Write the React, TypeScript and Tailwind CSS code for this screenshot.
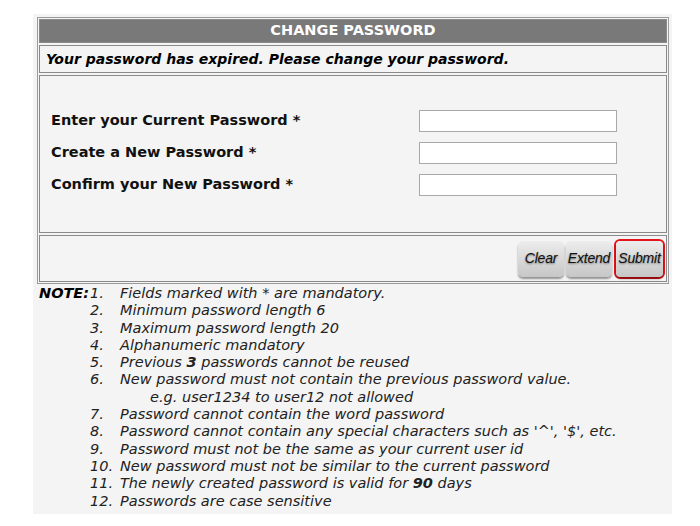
import React from 'react';

const verdana = { fontFamily: '"DejaVu Sans", Verdana, sans-serif' };

const FIELDS = ['Enter your Current Password *', 'Create a New Password *', 'Confirm your New Password *'];

const NOTES: { n: string; text: React.ReactNode; sub?: string }[] = [
  { n: '1.', text: 'Fields marked with * are mandatory.' },
  { n: '2.', text: 'Minimum password length 6' },
  { n: '3.', text: 'Maximum password length 20' },
  { n: '4.', text: 'Alphanumeric mandatory' },
  { n: '5.', text: <>Previous <b>3</b> passwords cannot be reused</> },
  { n: '6.', text: 'New password must not contain the previous password value.', sub: 'e.g. user1234 to user12 not allowed' },
  { n: '7.', text: 'Password cannot contain the word password' },
  { n: '8.', text: "Password cannot contain any special characters such as '^', '$', etc." },
  { n: '9.', text: 'Password must not be the same as your current user id' },
  { n: '10.', text: 'New password must not be similar to the current password' },
  { n: '11.', text: <>The newly created password is valid for <b>90</b> days</> },
  { n: '12.', text: 'Passwords are case sensitive' },
];

const Btn = ({ label, w }: { label: string; w: string }) => (
  <button
    className={`${w} h-[36px] px-0 rounded-[5px] bg-gradient-to-b from-[#ededed] to-[#c6c6c6] shadow-[0_2px_2px_rgba(0,0,0,0.4)] text-[14px] italic tracking-[-0.2px] text-[#111] [text-shadow:0_1px_2px_rgba(0,0,0,0.45)]`}
    style={{ fontFamily: '"Liberation Sans", Arial, sans-serif' }}
  >
    {label}
  </button>
);

const App: React.FC = () => {
  return (
    <div className="min-h-[526px] bg-white pl-[33px] pt-[14px]" style={verdana}>
      <div className="w-[639px] bg-[#f4f4f4] pt-[3px] pl-[4px] pb-[4px]">
        {/* main table */}
        <div className="w-[632px] border border-[#9a9a9a] p-[1px] flex flex-col gap-[2px]">
          <div className="h-[24px] bg-[#797979] border border-[#8a8a8a] flex items-center justify-center text-white font-bold text-[14.5px]">
            CHANGE PASSWORD
          </div>
          <div className="h-[28px] border border-[#8a8a8a] flex items-center pl-[6px] font-bold italic text-[14px] text-black">
            Your password has expired. Please change your password.
          </div>
          <div className="h-[158px] border border-[#8a8a8a] pl-[11px] pt-[34px] flex flex-col gap-[10px]">
            {FIELDS.map((f) => (
              <div key={f} className="flex items-center h-[22px]">
                <span className="w-[368px] font-bold text-[14.5px] text-[#111]">{f}</span>
                <input type="password" className="w-[198px] h-[22px] bg-white border border-[#a8a8a8] outline-none" />
              </div>
            ))}
          </div>
          <div className="h-[47px] border border-[#8a8a8a] flex items-center justify-end gap-[2px] pr-[1px]">
            <Btn label="Clear" w="w-[46px]" />
            <Btn label="Extend" w="w-[46px]" />
            <div className="rounded-[6px] border-[2px] border-[#e4141b]">
              <Btn label="Submit" w="w-[47px]" />
            </div>
          </div>
        </div>
        {/* notes */}
        <div className="mt-[1px] ml-[2px] text-[14.5px] italic text-[#222] leading-[17.3px]">
          {NOTES.map((note, i) => (
            <div key={note.n}>
              <div className="flex whitespace-nowrap">
                <span className="w-[51px] font-bold text-black">{i === 0 ? 'NOTE:' : ''}</span>
                <span className="w-[30px]">{note.n}</span>
                <span>{note.text}</span>
              </div>
              {note.sub && <div className="pl-[111px]">{note.sub}</div>}
            </div>
          ))}
        </div>
      </div>
    </div>
  );
};

export default App;
